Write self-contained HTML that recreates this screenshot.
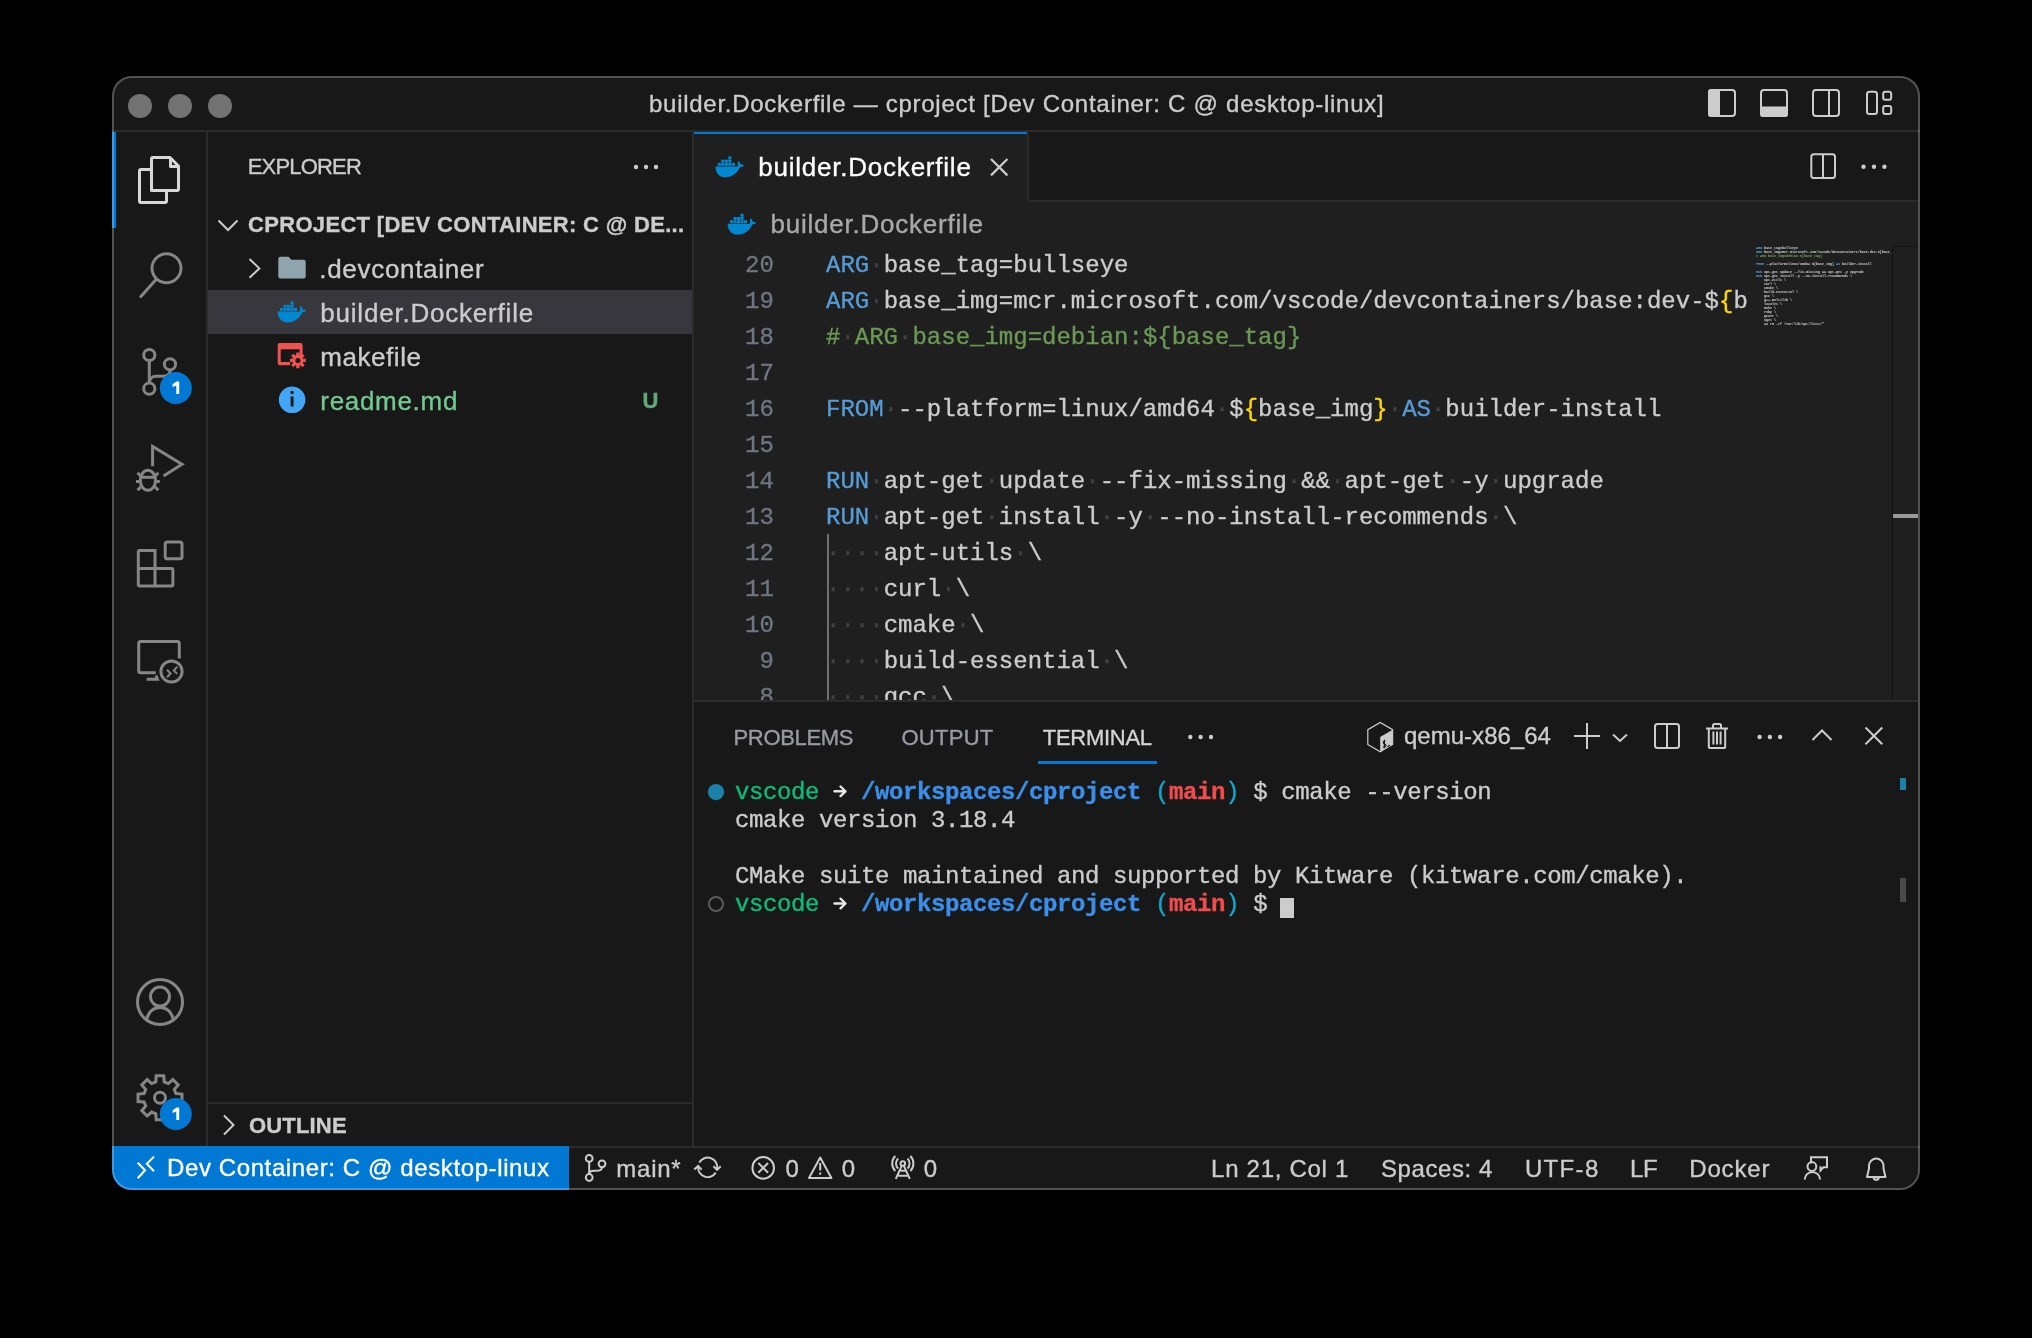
<!DOCTYPE html>
<html><head><meta charset="utf-8"><title>VS Code</title>
<style>
html,body{margin:0;padding:0;background:#000;width:2032px;height:1338px;overflow:hidden}
#win{position:absolute;left:0;top:0;width:2032px;height:1338px;clip-path:inset(76px 112px 148px 112px round 20px);will-change:transform}
.t{position:absolute;line-height:0;white-space:pre;-webkit-text-stroke:0.35px currentColor}
svg{position:absolute;left:0;top:0}
</style></head><body>
<div id="win">
<div style="position:absolute;left:112px;top:76px;width:1808px;height:1114px;background:#181818;"></div>
<div style="position:absolute;left:694px;top:132px;width:1224px;height:568px;background:#1f1f1f;"></div>
<div style="position:absolute;left:1029px;top:132px;width:889px;height:68px;background:#181818;"></div>
<div style="position:absolute;left:1029px;top:200px;width:889px;height:2px;background:#2b2b2b;"></div>
<div style="position:absolute;left:1027px;top:134px;width:2px;height:66px;background:#2b2b2b;"></div>
<div style="position:absolute;left:694px;top:132px;width:333px;height:2px;background:#0078d4;"></div>
<div style="position:absolute;left:112px;top:130px;width:1808px;height:2px;background:#2b2b2b;"></div>
<div style="position:absolute;left:206px;top:132px;width:2px;height:1014px;background:#2b2b2b;"></div>
<div style="position:absolute;left:692px;top:132px;width:2px;height:1014px;background:#2b2b2b;"></div>
<div style="position:absolute;left:694px;top:700px;width:1224px;height:2px;background:#2b2b2b;"></div>
<div style="position:absolute;left:208px;top:1102px;width:484px;height:2px;background:#2b2b2b;"></div>
<div style="position:absolute;left:112px;top:1146px;width:1808px;height:2px;background:#2b2b2b;"></div>
<div style="position:absolute;left:112px;top:1146px;width:457px;height:44px;background:#0078d4;"></div>
<div style="position:absolute;left:112px;top:132px;width:4px;height:96px;background:#0078d4;"></div>
<div style="position:absolute;left:208px;top:290px;width:484px;height:44px;background:#37373d;"></div>
<div style="position:absolute;left:1892px;top:246px;width:1px;height:454px;background:#101010;"></div>
<div style="position:absolute;left:1892px;top:246px;width:26px;height:1px;background:#141414;"></div>
<div style="position:absolute;left:1893px;top:514px;width:25px;height:4px;background:#9a9a9a;"></div>
<div style="position:absolute;left:1038px;top:761px;width:119px;height:3px;background:#0078d4;"></div>
<div style="position:absolute;left:1280px;top:898px;width:13.5px;height:19.600000000000023px;background:#cccccc;"></div>
<div style="position:absolute;left:1900px;top:778px;width:6px;height:12px;background:#1b81a8;"></div>
<div style="position:absolute;left:1900px;top:878px;width:6px;height:24px;background:#4a4a4a;"></div>
<svg width="2032" height="1338" viewBox="0 0 2032 1338">
<circle cx="140" cy="106" r="12" fill="#727272"/>
<circle cx="180" cy="106" r="12" fill="#727272"/>
<circle cx="220" cy="106" r="12" fill="#727272"/>
<g fill="none" stroke="#cccccc" stroke-width="2"><rect x="1709" y="90" width="26" height="26" rx="3"/><rect x="1761" y="90" width="26" height="26" rx="3"/><rect x="1813" y="90" width="26" height="26" rx="3"/><line x1="1829" y1="90" x2="1829" y2="116"/><rect x="1867" y="91.8" width="10" height="22.2" rx="2.5"/><rect x="1883.2" y="91.8" width="8" height="8" rx="2"/><rect x="1883.2" y="106" width="8" height="8" rx="2"/></g>
<path d="M1711 89 H1720 V117 H1711 Q1708 117 1708 114 V92 Q1708 89 1711 89Z" fill="#cccccc"/>
<path d="M1760 106.5 H1788 V114 Q1788 117 1785 117 H1763 Q1760 117 1760 114Z" fill="#cccccc"/>
<g fill="none" stroke="#d7d7d7" stroke-width="3" stroke-linejoin="round"><path d="M151.5 190.5 V159 Q151.5 157.5 153 157.5 H170 L178.5 166 V189 Q178.5 190.5 177 190.5 Z"/><path d="M170.5 157.5 V166.5 H178.5"/><path d="M151.5 169.5 H141 Q139.5 169.5 139.5 171 V201 Q139.5 202.5 141 202.5 H165 Q166.5 202.5 166.5 201 V190.5"/></g>
<g fill="none" stroke="#868686" stroke-width="3"><circle cx="166.5" cy="268.2" r="14.5"/><line x1="156.5" y1="279" x2="140" y2="297.5"/><circle cx="149.3" cy="355" r="5.6"/><circle cx="149.3" cy="388.7" r="5.6"/><circle cx="170" cy="364.3" r="5.6"/><line x1="149.3" y1="360.6" x2="149.3" y2="383.1"/><path d="M170.3 369.9 C170.3 374 168 376.3 162 376.3 H156 C151.8 376.3 149.4 379.3 149.4 383"/><path d="M152.6 466.3 V446.5 L182 464.2 L163.5 476"/><ellipse cx="147.9" cy="480.3" rx="7.6" ry="10"/><line x1="140" y1="477.3" x2="155.8" y2="477.3"/><line x1="137.5" y1="472.8" x2="141" y2="476.3"/><line x1="158.3" y1="472.8" x2="154.8" y2="476.3"/><line x1="136" y1="481.5" x2="140.3" y2="481.5"/><line x1="155.5" y1="481.5" x2="159.8" y2="481.5"/><line x1="137.5" y1="490.3" x2="141" y2="486.8"/><line x1="158.3" y1="490.3" x2="154.8" y2="486.8"/><rect x="165.2" y="542" width="16.8" height="16.8" rx="2"/><path d="M138.3 552 Q138.3 550.5 139.8 550.5 H155 V568.5 H171.4 Q172.9 568.5 172.9 570 V584.5 Q172.9 586 171.4 586 H139.8 Q138.3 586 138.3 584.5 Z"/><line x1="155" y1="568.5" x2="155" y2="586"/><line x1="138.3" y1="568.5" x2="155" y2="568.5"/><path d="M155.8 672.8 H140.7 Q138.7 672.8 138.7 670.8 V643.6 Q138.7 641.6 140.7 641.6 H177.3 Q179.3 641.6 179.3 643.6 V658.5"/><path d="M146.6 679.3 H157.5 L156 675.5"/><circle cx="171.5" cy="671.5" r="10.6"/></g>
<g fill="none" stroke="#868686" stroke-width="2"><path d="M167 669.8 L170.6 673.5 L167 677.2"/><path d="M177.2 666.8 L173.8 670.4 L177.2 673.9"/></g>
<g fill="none" stroke="#868686" stroke-width="3"><circle cx="160" cy="1002" r="22.5"/><circle cx="160" cy="996.6" r="9.5"/><path d="M146.5 1019.5 C149 1011 154 1007.5 160 1007.5 C166 1007.5 171 1011 173.5 1019.5"/></g>
<path d="M155.76 1081.85 L156.23 1075.82 L163.77 1075.82 L164.24 1081.85 L168.28 1083.53 L172.87 1079.59 L178.21 1084.93 L174.27 1089.52 L175.95 1093.56 L181.98 1094.03 L181.98 1101.57 L175.95 1102.04 L174.27 1106.08 L178.21 1110.67 L172.87 1116.01 L168.28 1112.07 L164.24 1113.75 L163.77 1119.78 L156.23 1119.78 L155.76 1113.75 L151.72 1112.07 L147.13 1116.01 L141.79 1110.67 L145.73 1106.08 L144.05 1102.04 L138.02 1101.57 L138.02 1094.03 L144.05 1093.56 L145.73 1089.52 L141.79 1084.93 L147.13 1079.59 L151.72 1083.53 Z" fill="none" stroke="#868686" stroke-width="3" stroke-linejoin="miter"/>
<circle cx="160" cy="1097.8" r="5.5" fill="none" stroke="#868686" stroke-width="3"/>
<circle cx="175.8" cy="388" r="16" fill="#0078d4"/>
<path d="M172.6 384.2 L176.6 381.6 H179.2 V394 H176.3 V385.4 L172.6 387.1 Z" fill="#ffffff"/>
<circle cx="175.8" cy="1114" r="16" fill="#0078d4"/>
<path d="M172.6 1110.2 L176.6 1107.6 H179.2 V1120 H176.3 V1111.4 L172.6 1113.1 Z" fill="#ffffff"/>
<circle cx="636" cy="167" r="2.2" fill="#cccccc"/>
<circle cx="646" cy="167" r="2.2" fill="#cccccc"/>
<circle cx="656" cy="167" r="2.2" fill="#cccccc"/>
<polyline points="218.5,220.5 228,230 237.5,220.5" fill="none" stroke="#cccccc" stroke-width="2"/>
<polyline points="249.5,259 259.3,268.4 249.5,277.8" fill="none" stroke="#cccccc" stroke-width="2"/>
<path d="M280.3 256.8 H288.5 L291.5 259.8 H303.7 Q305.7 259.8 305.7 261.8 V276.6 Q305.7 278.6 303.7 278.6 H280.3 Q278.3 278.6 278.3 276.6 V258.8 Q278.3 256.8 280.3 256.8Z" fill="#90a4ae"/>
<g transform="translate(277.6,301.4) scale(1.0)" fill="#0288d1"><path d="M0 10.1 H21.5 C22.3 10.1 22.6 9.6 22.3 8.6 C22 7.2 22.4 5.6 23.2 4.6 C24.2 5.5 24.9 6.8 25.1 8.1 C26.4 7.9 27.6 8.2 28.4 9.1 C27.7 10.3 26.1 10.9 24.6 10.8 C22.4 16.8 17 21 9.8 21 C3.6 21 0.3 16.5 0 10.1Z"/><rect x="2.4" y="6.6" width="3.1" height="2.9"/><rect x="5.9" y="6.6" width="3.1" height="2.9"/><rect x="9.4" y="6.6" width="3.1" height="2.9"/><rect x="12.9" y="6.6" width="3.1" height="2.9"/><rect x="16.4" y="6.6" width="3.1" height="2.9"/><rect x="5.9" y="3.4" width="3.1" height="2.9"/><rect x="9.4" y="3.4" width="3.1" height="2.9"/><rect x="12.9" y="3.4" width="3.1" height="2.9"/><rect x="12.9" y="0.2" width="3.1" height="2.9"/></g>
<path fill="#ef5350" fill-rule="evenodd" d="M279.7 343 H300.6 Q302.6 343 302.6 345 V356 L299.6 356 V349.2 H280.7 V361.9 H290 V365.2 H279.7 Q277.7 365.2 277.7 363.2 V345 Q277.7 343 279.7 343Z"/>
<path d="M303.25 358.75 L305.84 358.79 L305.84 362.01 L303.25 362.05 L302.85 363.01 L304.65 364.88 L302.38 367.15 L300.51 365.35 L299.55 365.75 L299.51 368.34 L296.29 368.34 L296.25 365.75 L295.29 365.35 L293.42 367.15 L291.15 364.88 L292.95 363.01 L292.55 362.05 L289.96 362.01 L289.96 358.79 L292.55 358.75 L292.95 357.79 L291.15 355.92 L293.42 353.65 L295.29 355.45 L296.25 355.05 L296.29 352.46 L299.51 352.46 L299.55 355.05 L300.51 355.45 L302.38 353.65 L304.65 355.92 L302.85 357.79 Z" fill="#ef5350"/>
<circle cx="297.9" cy="360.4" r="2.5" fill="#181818"/>
<circle cx="292.1" cy="399.8" r="13.3" fill="#42a5f5"/>
<rect x="290.6" y="396.5" width="3" height="10" fill="#1b1b1b"/><circle cx="292.1" cy="392.5" r="1.7" fill="#1b1b1b"/>
<polyline points="224,1115.5 233.5,1125 224,1134.5" fill="none" stroke="#cccccc" stroke-width="2"/>
<g transform="translate(715.4,156.3) scale(1.0)" fill="#0288d1"><path d="M0 10.1 H21.5 C22.3 10.1 22.6 9.6 22.3 8.6 C22 7.2 22.4 5.6 23.2 4.6 C24.2 5.5 24.9 6.8 25.1 8.1 C26.4 7.9 27.6 8.2 28.4 9.1 C27.7 10.3 26.1 10.9 24.6 10.8 C22.4 16.8 17 21 9.8 21 C3.6 21 0.3 16.5 0 10.1Z"/><rect x="2.4" y="6.6" width="3.1" height="2.9"/><rect x="5.9" y="6.6" width="3.1" height="2.9"/><rect x="9.4" y="6.6" width="3.1" height="2.9"/><rect x="12.9" y="6.6" width="3.1" height="2.9"/><rect x="16.4" y="6.6" width="3.1" height="2.9"/><rect x="5.9" y="3.4" width="3.1" height="2.9"/><rect x="9.4" y="3.4" width="3.1" height="2.9"/><rect x="12.9" y="3.4" width="3.1" height="2.9"/><rect x="12.9" y="0.2" width="3.1" height="2.9"/></g>
<g stroke="#cccccc" stroke-width="2.2"><line x1="991" y1="159" x2="1007.4" y2="175.4"/><line x1="1007.4" y1="159" x2="991" y2="175.4"/></g>
<g fill="none" stroke="#cccccc" stroke-width="2"><rect x="1811.3" y="154.3" width="23.7" height="23.7" rx="2.5"/><line x1="1823" y1="154.3" x2="1823" y2="178"/></g>
<circle cx="1863.5" cy="166.8" r="2.2" fill="#cccccc"/>
<circle cx="1874" cy="166.8" r="2.2" fill="#cccccc"/>
<circle cx="1884.4" cy="166.8" r="2.2" fill="#cccccc"/>
<g transform="translate(727.6,213.6) scale(1.0)" fill="#0288d1"><path d="M0 10.1 H21.5 C22.3 10.1 22.6 9.6 22.3 8.6 C22 7.2 22.4 5.6 23.2 4.6 C24.2 5.5 24.9 6.8 25.1 8.1 C26.4 7.9 27.6 8.2 28.4 9.1 C27.7 10.3 26.1 10.9 24.6 10.8 C22.4 16.8 17 21 9.8 21 C3.6 21 0.3 16.5 0 10.1Z"/><rect x="2.4" y="6.6" width="3.1" height="2.9"/><rect x="5.9" y="6.6" width="3.1" height="2.9"/><rect x="9.4" y="6.6" width="3.1" height="2.9"/><rect x="12.9" y="6.6" width="3.1" height="2.9"/><rect x="16.4" y="6.6" width="3.1" height="2.9"/><rect x="5.9" y="3.4" width="3.1" height="2.9"/><rect x="9.4" y="3.4" width="3.1" height="2.9"/><rect x="12.9" y="3.4" width="3.1" height="2.9"/><rect x="12.9" y="0.2" width="3.1" height="2.9"/></g>
<circle cx="1190.3" cy="737" r="2.2" fill="#cccccc"/>
<circle cx="1200.6" cy="737" r="2.2" fill="#cccccc"/>
<circle cx="1211" cy="737" r="2.2" fill="#cccccc"/>
<path d="M1380.2 722.5 L1392.6 729.7 V744.5 L1380.2 751.7 L1367.8 744.5 V729.7 Z" fill="none" stroke="#cccccc" stroke-width="1.2"/>
<path d="M1380.2 737.1 L1392.6 729.7 V744.5 L1380.2 751.7 Z" fill="#cccccc"/>
<g fill="none" stroke="#181818" stroke-width="1.1"><path d="M1385.3 741.2 Q1383.4 740.6 1383.3 742.4 Q1383.4 743.8 1385 744.2 Q1386.5 745 1385.5 746.6 Q1384.2 747.6 1383 746.6"/><line x1="1384.5" y1="739.8" x2="1384.3" y2="748.2"/><line x1="1387.3" y1="746.8" x2="1390" y2="745.2"/></g>
<g fill="none" stroke="#cccccc" stroke-width="2"><line x1="1574" y1="736" x2="1600" y2="736"/><line x1="1587" y1="723" x2="1587" y2="749"/><polyline points="1613,734.5 1620,741 1627,734.5"/><rect x="1655" y="723.9" width="24" height="24.2" rx="2.5"/><line x1="1667" y1="723.9" x2="1667" y2="748.1"/><path d="M1706 728.5 H1728"/><path d="M1713 728.5 V725.5 Q1713 724 1714.5 724 H1719.5 Q1721 724 1721 725.5 V728.5"/><path d="M1708.8 728.5 V746.5 Q1708.8 748.1 1710.4 748.1 H1723.6 Q1725.2 748.1 1725.2 746.5 V728.5"/><line x1="1713.4" y1="731.5" x2="1713.4" y2="744.5"/><line x1="1717" y1="731.5" x2="1717" y2="744.5"/><line x1="1720.6" y1="731.5" x2="1720.6" y2="744.5"/><polyline points="1812.5,740 1822,730.5 1831.5,740"/><line x1="1865.5" y1="727.5" x2="1882.3" y2="744.3"/><line x1="1882.3" y1="727.5" x2="1865.5" y2="744.3"/></g>
<circle cx="1759.6" cy="737" r="2.2" fill="#cccccc"/>
<circle cx="1769.9" cy="737" r="2.2" fill="#cccccc"/>
<circle cx="1780.1" cy="737" r="2.2" fill="#cccccc"/>
<path d="M834.5 791.3 H845 M840.5 786.5 L845.5 791.3 L840.5 796.1" fill="none" stroke="#e5e5e5" stroke-width="2.4" stroke-linecap="round" stroke-linejoin="round"/>
<path d="M834.5 903.5 H845 M840.5 898.7 L845.5 903.5 L840.5 908.3000000000001" fill="none" stroke="#e5e5e5" stroke-width="2.4" stroke-linecap="round" stroke-linejoin="round"/>
<circle cx="716" cy="792.1" r="8.1" fill="#1b81a8"/>
<circle cx="716" cy="904" r="7.1" fill="none" stroke="#5a5a5a" stroke-width="2"/>
<g fill="none" stroke="#ffffff" stroke-width="2"><polyline points="137.7,1162.8 145.1,1170.3 137.7,1178.3"/><polyline points="154,1156.6 146.8,1163.8 154,1171.3"/></g>
<g fill="none" stroke="#cccccc" stroke-width="2"><circle cx="589.2" cy="1158.4" r="3.4"/><circle cx="589.2" cy="1177.5" r="3.4"/><circle cx="602" cy="1163.8" r="3.4"/><line x1="589.2" y1="1161.8" x2="589.2" y2="1174.1"/><path d="M602 1167.2 C602 1170 599.5 1170.8 596 1170.8 H594 C591 1170.8 589.2 1172 589.2 1174"/><path d="M699.3 1162.6 A9.55 9.55 0 0 1 717.1 1168.8"/><polyline points="713.4,1166.2 717.1,1169.8 720.7,1166.2"/><path d="M715.7 1172.6 A9.55 9.55 0 0 1 698.1 1167"/><polyline points="694.3,1169.6 698.1,1166 701.6,1169.6"/><circle cx="763.2" cy="1167.9" r="10.8"/><line x1="758.3" y1="1163" x2="768.1" y2="1172.8"/><line x1="768.1" y1="1163" x2="758.3" y2="1172.8"/><path d="M820.2 1157.5 L831.4 1178 H809 Z" stroke-linejoin="round"/><circle cx="902.8" cy="1163.5" r="2.3"/><path d="M901.8 1165.6 L895.8 1178.8 M903.8 1165.6 L909.8 1178.8 M900.5 1170.7 H905.3 M898.3 1175.8 H907.5"/><path d="M898.1 1158.5 A7 7 0 0 0 898.1 1168.5"/><path d="M907.5 1158.5 A7 7 0 0 1 907.5 1168.5"/><path d="M895.3 1156 A10.6 10.6 0 0 0 895.3 1171"/><path d="M910.3 1156 A10.6 10.6 0 0 1 910.3 1171"/><path d="M1811 1163.5 V1157.2 H1827 V1167.3 H1823.5 L1820.5 1170.5 V1167.3 H1819.5"/><circle cx="1811.9" cy="1166.5" r="4.4"/><path d="M1804.8 1179.5 A7.6 7.6 0 0 1 1820 1179.5"/><path d="M1867 1177 L1869 1168.5 V1165 A7.3 7.3 0 0 1 1883.5 1165 V1168.5 L1885.5 1177 Z" stroke-linejoin="round"/><path d="M1873.5 1177.5 A2.8 2.8 0 0 0 1879 1177.5"/></g>
<g fill="#cccccc"><rect x="819.2" y="1163" width="2" height="7.5"/><rect x="819.2" y="1172.5" width="2" height="2.2"/></g>
</svg>
<span class="t" style="left:649.00px;top:103.68px;font:400 24px/0 'Liberation Sans';color:#cccccc;letter-spacing:0.730px">builder.Dockerfile — cproject [Dev Container: C @ desktop-linux]</span>
<span class="t" style="left:247.70px;top:167.47px;font:400 22px/0 'Liberation Sans';color:#cccccc;letter-spacing:-0.804px">EXPLORER</span>
<span class="t" style="left:248.00px;top:224.77px;font:700 22px/0 'Liberation Sans';color:#cccccc;letter-spacing:0.318px">CPROJECT [DEV CONTAINER: C @ DE...</span>
<span class="t" style="left:319.30px;top:269.09px;font:400 26px/0 'Liberation Sans';color:#cccccc;letter-spacing:0.688px">.devcontainer</span>
<span class="t" style="left:320.30px;top:313.09px;font:400 26px/0 'Liberation Sans';color:#cccccc;letter-spacing:0.790px">builder.Dockerfile</span>
<span class="t" style="left:320.30px;top:356.69px;font:400 26px/0 'Liberation Sans';color:#cccccc;letter-spacing:0.549px">makefile</span>
<span class="t" style="left:320.30px;top:400.69px;font:400 26px/0 'Liberation Sans';color:#73c991;letter-spacing:0.695px">readme.md</span>
<span class="t" style="left:642.50px;top:400.87px;font:700 22px/0 'Liberation Sans';color:#62a877;letter-spacing:0.000px">U</span>
<span class="t" style="left:248.90px;top:1125.77px;font:700 22px/0 'Liberation Sans';color:#cccccc;letter-spacing:0.187px">OUTLINE</span>
<span class="t" style="left:758.30px;top:167.49px;font:400 26px/0 'Liberation Sans';color:#ffffff;letter-spacing:0.772px">builder.Dockerfile</span>
<span class="t" style="left:770.50px;top:224.39px;font:400 26px/0 'Liberation Sans';color:#a9a9a9;letter-spacing:0.772px">builder.Dockerfile</span>
<span class="t" style="left:733.50px;top:737.77px;font:400 22px/0 'Liberation Sans';color:#979ca3;letter-spacing:-0.326px">PROBLEMS</span>
<span class="t" style="left:901.50px;top:737.77px;font:400 22px/0 'Liberation Sans';color:#979ca3;letter-spacing:0.260px">OUTPUT</span>
<span class="t" style="left:1042.80px;top:737.77px;font:400 22px/0 'Liberation Sans';color:#d4d4d4;letter-spacing:-0.286px">TERMINAL</span>
<span class="t" style="left:1404.00px;top:735.78px;font:400 24px/0 'Liberation Sans';color:#cccccc;letter-spacing:0.018px">qemu-x86_64</span>
<span class="t" style="left:167.00px;top:1167.98px;font:400 24px/0 'Liberation Sans';color:#ffffff;letter-spacing:0.607px">Dev Container: C @ desktop-linux</span>
<span class="t" style="left:616.30px;top:1168.98px;font:400 24px/0 'Liberation Sans';color:#cccccc;letter-spacing:0.745px">main*</span>
<span class="t" style="left:785.40px;top:1168.98px;font:400 24px/0 'Liberation Sans';color:#cccccc;letter-spacing:0.000px">0</span>
<span class="t" style="left:841.80px;top:1168.98px;font:400 24px/0 'Liberation Sans';color:#cccccc;letter-spacing:0.000px">0</span>
<span class="t" style="left:923.80px;top:1168.98px;font:400 24px/0 'Liberation Sans';color:#cccccc;letter-spacing:0.000px">0</span>
<span class="t" style="left:1211.10px;top:1168.98px;font:400 24px/0 'Liberation Sans';color:#cccccc;letter-spacing:0.711px">Ln 21, Col 1</span>
<span class="t" style="left:1381.00px;top:1168.98px;font:400 24px/0 'Liberation Sans';color:#cccccc;letter-spacing:0.577px">Spaces: 4</span>
<span class="t" style="left:1524.90px;top:1168.98px;font:400 24px/0 'Liberation Sans';color:#cccccc;letter-spacing:1.339px">UTF-8</span>
<span class="t" style="left:1630.10px;top:1168.98px;font:400 24px/0 'Liberation Sans';color:#cccccc;letter-spacing:-0.448px">LF</span>
<span class="t" style="left:1689.20px;top:1168.98px;font:400 24px/0 'Liberation Sans';color:#cccccc;letter-spacing:0.875px">Docker</span>
<div style="position:absolute;left:694px;top:202px;width:1054px;height:498px;overflow:hidden"><div style="position:absolute;left:133px;top:332px;width:2px;height:200px;background:#707070"></div><span class="t" style="left:51.00px;top:63.62px;font:400 24px/0 'Liberation Mono';color:#6e7681">20</span><span class="t" style="left:132px;top:63.62px;font:400 24px/0 'Liberation Mono'"><span style="color:#569cd6">ARG</span><span style="color:#404040">·</span><span style="color:#cccccc">base_tag=bullseye</span></span><span class="t" style="left:51.00px;top:99.62px;font:400 24px/0 'Liberation Mono';color:#6e7681">19</span><span class="t" style="left:132px;top:99.62px;font:400 24px/0 'Liberation Mono'"><span style="color:#569cd6">ARG</span><span style="color:#404040">·</span><span style="color:#cccccc">base_img=mcr.microsoft.com/vscode/devcontainers/base:dev-$</span><span style="color:#ffd700">{</span><span style="color:#cccccc">base_tag</span><span style="color:#ffd700">}</span></span><span class="t" style="left:51.00px;top:135.62px;font:400 24px/0 'Liberation Mono';color:#6e7681">18</span><span class="t" style="left:132px;top:135.62px;font:400 24px/0 'Liberation Mono'"><span style="color:#6a9955">#</span><span style="color:#404040">·</span><span style="color:#6a9955">ARG</span><span style="color:#404040">·</span><span style="color:#6a9955">base_img=debian:${base_tag}</span></span><span class="t" style="left:51.00px;top:171.62px;font:400 24px/0 'Liberation Mono';color:#6e7681">17</span><span class="t" style="left:51.00px;top:207.62px;font:400 24px/0 'Liberation Mono';color:#6e7681">16</span><span class="t" style="left:132px;top:207.62px;font:400 24px/0 'Liberation Mono'"><span style="color:#569cd6">FROM</span><span style="color:#404040">·</span><span style="color:#cccccc">--platform=linux/amd64</span><span style="color:#404040">·</span><span style="color:#cccccc">$</span><span style="color:#ffd700">{</span><span style="color:#cccccc">base_img</span><span style="color:#ffd700">}</span><span style="color:#404040">·</span><span style="color:#569cd6">AS</span><span style="color:#404040">·</span><span style="color:#cccccc">builder-install</span></span><span class="t" style="left:51.00px;top:243.62px;font:400 24px/0 'Liberation Mono';color:#6e7681">15</span><span class="t" style="left:51.00px;top:279.62px;font:400 24px/0 'Liberation Mono';color:#6e7681">14</span><span class="t" style="left:132px;top:279.62px;font:400 24px/0 'Liberation Mono'"><span style="color:#569cd6">RUN</span><span style="color:#404040">·</span><span style="color:#cccccc">apt-get</span><span style="color:#404040">·</span><span style="color:#cccccc">update</span><span style="color:#404040">·</span><span style="color:#cccccc">--fix-missing</span><span style="color:#404040">·</span><span style="color:#cccccc">&amp;&amp;</span><span style="color:#404040">·</span><span style="color:#cccccc">apt-get</span><span style="color:#404040">·</span><span style="color:#cccccc">-y</span><span style="color:#404040">·</span><span style="color:#cccccc">upgrade</span></span><span class="t" style="left:51.00px;top:315.62px;font:400 24px/0 'Liberation Mono';color:#6e7681">13</span><span class="t" style="left:132px;top:315.62px;font:400 24px/0 'Liberation Mono'"><span style="color:#569cd6">RUN</span><span style="color:#404040">·</span><span style="color:#cccccc">apt-get</span><span style="color:#404040">·</span><span style="color:#cccccc">install</span><span style="color:#404040">·</span><span style="color:#cccccc">-y</span><span style="color:#404040">·</span><span style="color:#cccccc">--no-install-recommends</span><span style="color:#404040">·</span><span style="color:#cccccc">\</span></span><span class="t" style="left:51.00px;top:351.62px;font:400 24px/0 'Liberation Mono';color:#6e7681">12</span><span class="t" style="left:132px;top:351.62px;font:400 24px/0 'Liberation Mono'"><span style="color:#404040">·</span><span style="color:#404040">·</span><span style="color:#404040">·</span><span style="color:#404040">·</span><span style="color:#cccccc">apt-utils</span><span style="color:#404040">·</span><span style="color:#cccccc">\</span></span><span class="t" style="left:51.00px;top:387.62px;font:400 24px/0 'Liberation Mono';color:#6e7681">11</span><span class="t" style="left:132px;top:387.62px;font:400 24px/0 'Liberation Mono'"><span style="color:#404040">·</span><span style="color:#404040">·</span><span style="color:#404040">·</span><span style="color:#404040">·</span><span style="color:#cccccc">curl</span><span style="color:#404040">·</span><span style="color:#cccccc">\</span></span><span class="t" style="left:51.00px;top:423.62px;font:400 24px/0 'Liberation Mono';color:#6e7681">10</span><span class="t" style="left:132px;top:423.62px;font:400 24px/0 'Liberation Mono'"><span style="color:#404040">·</span><span style="color:#404040">·</span><span style="color:#404040">·</span><span style="color:#404040">·</span><span style="color:#cccccc">cmake</span><span style="color:#404040">·</span><span style="color:#cccccc">\</span></span><span class="t" style="left:65.40px;top:459.62px;font:400 24px/0 'Liberation Mono';color:#6e7681">9</span><span class="t" style="left:132px;top:459.62px;font:400 24px/0 'Liberation Mono'"><span style="color:#404040">·</span><span style="color:#404040">·</span><span style="color:#404040">·</span><span style="color:#404040">·</span><span style="color:#cccccc">build-essential</span><span style="color:#404040">·</span><span style="color:#cccccc">\</span></span><span class="t" style="left:65.40px;top:495.62px;font:400 24px/0 'Liberation Mono';color:#6e7681">8</span><span class="t" style="left:132px;top:495.62px;font:400 24px/0 'Liberation Mono'"><span style="color:#404040">·</span><span style="color:#404040">·</span><span style="color:#404040">·</span><span style="color:#404040">·</span><span style="color:#cccccc">gcc</span><span style="color:#404040">·</span><span style="color:#cccccc">\</span></span></div>
<div style="position:absolute;left:1756px;top:246px;width:136px;height:100px;overflow:hidden"><div style="position:absolute;left:0;top:0px;height:4px;font:700 3.333px/4px 'Liberation Mono';white-space:pre"><span style="color:#5a9fd8">ARG</span><span style="color:#d0d0d0"> base_tag=bullseye</span></div><div style="position:absolute;left:0;top:4px;height:4px;font:700 3.333px/4px 'Liberation Mono';white-space:pre"><span style="color:#5a9fd8">ARG</span><span style="color:#d0d0d0"> base_img=mcr.microsoft.com/vscode/devcontainers/base:dev-${base_</span></div><div style="position:absolute;left:0;top:8px;height:4px;font:700 3.333px/4px 'Liberation Mono';white-space:pre"><span style="color:#72a85c"># ARG base_img=debian:${base_tag}</span></div><div style="position:absolute;left:0;top:12px;height:4px;font:700 3.333px/4px 'Liberation Mono';white-space:pre"></div><div style="position:absolute;left:0;top:16px;height:4px;font:700 3.333px/4px 'Liberation Mono';white-space:pre"><span style="color:#5a9fd8">FROM</span><span style="color:#d0d0d0"> --platform=linux/amd64 ${base_img} </span><span style="color:#5a9fd8">AS</span><span style="color:#d0d0d0"> builder-install</span></div><div style="position:absolute;left:0;top:20px;height:4px;font:700 3.333px/4px 'Liberation Mono';white-space:pre"></div><div style="position:absolute;left:0;top:24px;height:4px;font:700 3.333px/4px 'Liberation Mono';white-space:pre"><span style="color:#5a9fd8">RUN</span><span style="color:#d0d0d0"> apt-get update --fix-missing &amp;&amp; apt-get -y upgrade</span></div><div style="position:absolute;left:0;top:28px;height:4px;font:700 3.333px/4px 'Liberation Mono';white-space:pre"><span style="color:#5a9fd8">RUN</span><span style="color:#d0d0d0"> apt-get install -y --no-install-recommends \</span></div><div style="position:absolute;left:0;top:32px;height:4px;font:700 3.333px/4px 'Liberation Mono';white-space:pre"><span style="color:#d0d0d0">    apt-utils \</span></div><div style="position:absolute;left:0;top:36px;height:4px;font:700 3.333px/4px 'Liberation Mono';white-space:pre"><span style="color:#d0d0d0">    curl \</span></div><div style="position:absolute;left:0;top:40px;height:4px;font:700 3.333px/4px 'Liberation Mono';white-space:pre"><span style="color:#d0d0d0">    cmake \</span></div><div style="position:absolute;left:0;top:44px;height:4px;font:700 3.333px/4px 'Liberation Mono';white-space:pre"><span style="color:#d0d0d0">    build-essential \</span></div><div style="position:absolute;left:0;top:48px;height:4px;font:700 3.333px/4px 'Liberation Mono';white-space:pre"><span style="color:#d0d0d0">    gcc \</span></div><div style="position:absolute;left:0;top:52px;height:4px;font:700 3.333px/4px 'Liberation Mono';white-space:pre"><span style="color:#d0d0d0">    g++-multilib \</span></div><div style="position:absolute;left:0;top:56px;height:4px;font:700 3.333px/4px 'Liberation Mono';white-space:pre"><span style="color:#d0d0d0">    locales \</span></div><div style="position:absolute;left:0;top:60px;height:4px;font:700 3.333px/4px 'Liberation Mono';white-space:pre"><span style="color:#d0d0d0">    make \</span></div><div style="position:absolute;left:0;top:64px;height:4px;font:700 3.333px/4px 'Liberation Mono';white-space:pre"><span style="color:#d0d0d0">    ruby \</span></div><div style="position:absolute;left:0;top:68px;height:4px;font:700 3.333px/4px 'Liberation Mono';white-space:pre"><span style="color:#d0d0d0">    gcovr \</span></div><div style="position:absolute;left:0;top:72px;height:4px;font:700 3.333px/4px 'Liberation Mono';white-space:pre"><span style="color:#d0d0d0">    wget \</span></div><div style="position:absolute;left:0;top:76px;height:4px;font:700 3.333px/4px 'Liberation Mono';white-space:pre"><span style="color:#d0d0d0">    &amp;&amp; rm -rf /var/lib/apt/lists/*</span></div></div>
<span class="t" style="left:735px;top:793.12px;font:400 24px/0 'Liberation Mono';letter-spacing:-0.4px"><span style="color:#0dbc79;">vscode</span><span style="color:#cccccc;">   </span><span style="color:#3b8eea;font-weight:700;">/workspaces/cproject</span><span style="color:#11a8cd;"> (</span><span style="color:#f14c4c;font-weight:700;">main</span><span style="color:#11a8cd;">)</span><span style="color:#cccccc;"> $ </span><span style="color:#cccccc;">cmake --version</span></span>
<span class="t" style="left:735px;top:821.22px;font:400 24px/0 'Liberation Mono';letter-spacing:-0.4px"><span style="color:#cccccc;">cmake version 3.18.4</span></span>
<span class="t" style="left:735px;top:877.32px;font:400 24px/0 'Liberation Mono';letter-spacing:-0.4px"><span style="color:#cccccc;">CMake suite maintained and supported by Kitware (kitware.com/cmake).</span></span>
<span class="t" style="left:735px;top:905.32px;font:400 24px/0 'Liberation Mono';letter-spacing:-0.4px"><span style="color:#0dbc79;">vscode</span><span style="color:#cccccc;">   </span><span style="color:#3b8eea;font-weight:700;">/workspaces/cproject</span><span style="color:#11a8cd;"> (</span><span style="color:#f14c4c;font-weight:700;">main</span><span style="color:#11a8cd;">)</span><span style="color:#cccccc;"> $ </span></span>
</div>
<div style="position:absolute;left:112px;top:76px;width:1808px;height:1114px;box-sizing:border-box;border:2px solid rgba(255,255,255,0.25);border-radius:20px"></div>
</body></html>
